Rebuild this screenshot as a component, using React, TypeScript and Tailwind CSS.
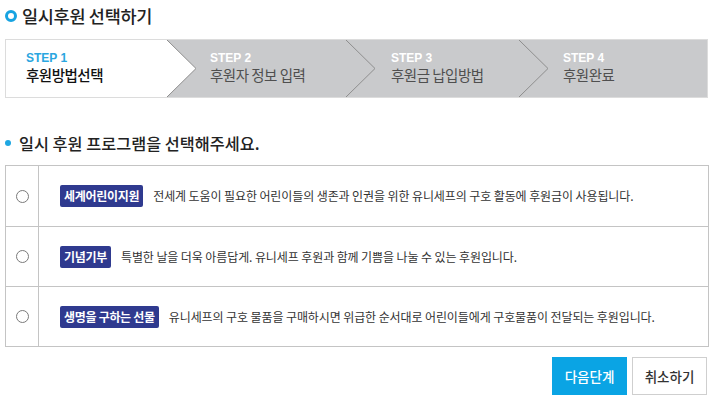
import React, { useState } from 'react';

const KR = { fontFamily: '"Noto Sans CJK KR", "Noto Sans", sans-serif' };

interface Step {
  no: number;
  label: string;
  width: string;
  pad: string;
}

const steps: Step[] = [
  { no: 1, label: '후원방법선택', width: 'w-[161px]', pad: 'pl-[20px]' },
  { no: 2, label: '후원자 정보 입력', width: 'w-[179px]', pad: 'pl-[43px]' },
  { no: 3, label: '후원금 납입방법', width: 'w-[173px]', pad: 'pl-[45px]' },
  { no: 4, label: '후원완료', width: 'flex-1', pad: 'pl-[44px]' },
];

const programs = [
  {
    id: 'world',
    badge: '세계어린이지원',
    desc: '전세계 도움이 필요한 어린이들의 생존과 인권을 위한 유니세프의 구호 활동에 후원금이 사용됩니다.',
  },
  {
    id: 'memorial',
    badge: '기념기부',
    desc: '특별한 날을 더욱 아름답게. 유니세프 후원과 함께 기쁨을 나눌 수 있는 후원입니다.',
  },
  {
    id: 'gift',
    badge: '생명을 구하는 선물',
    desc: '유니세프의 구호 물품을 구매하시면 위급한 순서대로 어린이들에게 구호물품이 전달되는 후원입니다.',
  },
];

const Chevron: React.FC<{ filled?: boolean }> = ({ filled }) => (
  <svg
    className="absolute left-full top-0 z-10"
    width="30"
    height="57"
    viewBox="0 0 30 57"
  >
    {filled && <polygon points="0,0 29,28.5 0,57" fill="#ffffff" />}
    <polyline points="0,0 29,28.5 0,57" fill="none" stroke="#8e8e8e" strokeWidth="1" />
  </svg>
);

export default function App() {
  const [selected, setSelected] = useState<string | null>(null);

  return (
    <div className="w-[720px] h-[403px] bg-white px-[5px] pt-[6px] text-[#222]" style={KR}>
      {/* title */}
      <div className="flex items-center gap-[5px] h-[20px]">
        <span className="w-[12px] h-[12px] rounded-full border-[3px] border-[#17a3e1]" />
        <h1 className="text-[17.5px] leading-none font-medium tracking-[-0.3px] text-[#222]">일시후원 선택하기</h1>
      </div>

      {/* steps */}
      <div className="mt-[13px] flex h-[59px] w-[703px] border border-[#dcdcdc] bg-[#c9cacc]">
        {steps.map((s) => {
          const active = s.no === 1;
          return (
            <div
              key={s.no}
              className={`relative flex flex-col justify-start pt-[11px] ${s.width} ${s.pad} ${active ? 'bg-white' : ''}`}
            >
              <span
                className={`text-[12px] font-bold leading-[14px] ${active ? 'text-[#2aa6e0]' : 'text-white'}`}
                style={{ fontFamily: '"Liberation Sans", Arial, sans-serif' }}
              >
                STEP {s.no}
              </span>
              <span className={`mt-[1px] text-[14.5px] leading-[18px] tracking-[-0.5px] ${active ? 'text-[#111] font-medium' : 'text-[#4f4f4f]'}`}>
                {s.label}
              </span>
              {s.no < 4 && <Chevron filled={active} />}
            </div>
          );
        })}
      </div>

      {/* section header */}
      <div className="mt-[36px] flex items-center gap-[8px] h-[18px]">
        <span className="w-[6px] h-[6px] rounded-full bg-[#1ea7e2]" />
        <h2 className="text-[16.3px] leading-none font-medium text-[#222]">일시 후원 프로그램을 선택해주세요.</h2>
      </div>

      {/* program table */}
      <div className="mt-[13px] w-[704px] border border-[#c4c4c4]">
        {programs.map((p, i) => (
          <label
            key={p.id}
            className={`flex h-[60px] cursor-pointer ${i > 0 ? 'border-t border-[#c4c4c4]' : ''}`}
            onClick={() => setSelected(p.id)}
          >
            <div className="w-[33px] flex items-center justify-center border-r border-[#c4c4c4]">
              <span className="w-[13px] h-[13px] rounded-full border border-[#7a7a7a] bg-white flex items-center justify-center">
                {selected === p.id && <span className="w-[7px] h-[7px] rounded-full bg-[#333]" />}
              </span>
            </div>
            <div className="flex items-center pl-[21px] gap-[10px]">
              <span className="h-[22px] px-[4px] flex items-center rounded-[2px] bg-[#2f3a8f] text-white text-[12px] font-bold tracking-[-0.3px]">
                {p.badge}
              </span>
              <span className="text-[12px] text-[#333] tracking-[-0.1px]">{p.desc}</span>
            </div>
          </label>
        ))}
      </div>

      {/* buttons */}
      <div className="mt-[10px] flex justify-end gap-[5px] pr-[8px]">
        <button className="w-[75px] h-[38px] bg-[#0aa4e4] text-white text-[13.5px] font-medium">다음단계</button>
        <button className="w-[75px] h-[38px] bg-white border border-[#cfcfcf] text-[#333] text-[13.5px] font-medium">취소하기</button>
      </div>
    </div>
  );
}
